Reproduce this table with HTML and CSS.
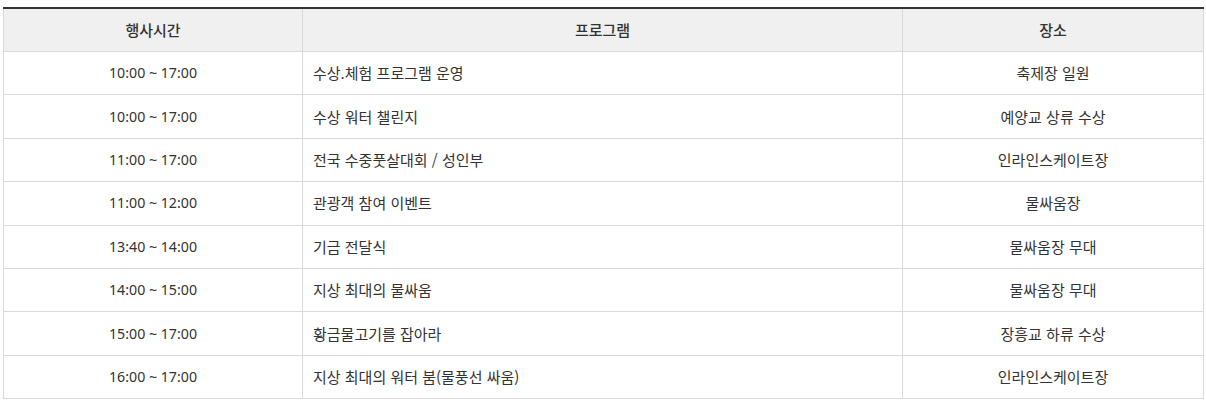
FILE: index.html
```html
<!DOCTYPE html>
<html lang="ko">
<head>
<meta charset="utf-8">
<link rel="stylesheet" href="styles.css">
</head>
<body>
<div class="wrap">
<table class="sched">
  <colgroup>
    <col class="c-time">
    <col class="c-prog">
    <col class="c-place">
  </colgroup>
  <thead>
    <tr><th>행사시간</th><th>프로그램</th><th>장소</th></tr>
  </thead>
  <tbody>
    <tr><td class="time">10:00 ~ 17:00</td><td class="left">수상.체험 프로그램 운영</td><td>축제장 일원</td></tr>
    <tr><td class="time">10:00 ~ 17:00</td><td class="left">수상 워터 챌린지</td><td>예양교 상류 수상</td></tr>
    <tr><td class="time">11:00 ~ 17:00</td><td class="left">전국 수중풋살대회 / 성인부</td><td>인라인스케이트장</td></tr>
    <tr><td class="time">11:00 ~ 12:00</td><td class="left">관광객 참여 이벤트</td><td>물싸움장</td></tr>
    <tr><td class="time">13:40 ~ 14:00</td><td class="left">기금 전달식</td><td>물싸움장 무대</td></tr>
    <tr><td class="time">14:00 ~ 15:00</td><td class="left">지상 최대의 물싸움</td><td>물싸움장 무대</td></tr>
    <tr><td class="time">15:00 ~ 17:00</td><td class="left">황금물고기를 잡아라</td><td>장흥교 하류 수상</td></tr>
    <tr><td class="time">16:00 ~ 17:00</td><td class="left">지상 최대의 워터 붐(물풍선 싸움)</td><td>인라인스케이트장</td></tr>
  </tbody>
</table>
</div>
</body>
</html>
```

FILE: styles.css
```css
html, body {
  margin: 0;
  padding: 0;
  background: #fff;
}
.wrap {
  padding: 7px 0 0 3px;
}
.sched {
  width: 1200px;
  border-collapse: collapse;
  table-layout: fixed;
  font-family: "Noto Sans CJK KR", "Noto Sans", sans-serif;
  font-size: 15px;
  color: #333;
}
.c-time { width: 299px; }
.c-prog { width: 600px; }
.c-place { width: 301px; }
.sched th,
.sched td {
  border: 1px solid #d9d9d9;
  text-align: center;
  padding: 0 10px;
  line-height: 20px;
}
.sched th {
  background: #f0f0f0;
  height: 42px;
  font-weight: 500;
  color: #333;
  border-top: 2px solid #333;
}
.sched td {
  height: 42.4px;
}
.sched td.time {
  font-family: "Noto Sans", "Noto Sans CJK KR", sans-serif;
  font-size: 14.2px;
}
.sched td.left {
  text-align: left;
}
```
